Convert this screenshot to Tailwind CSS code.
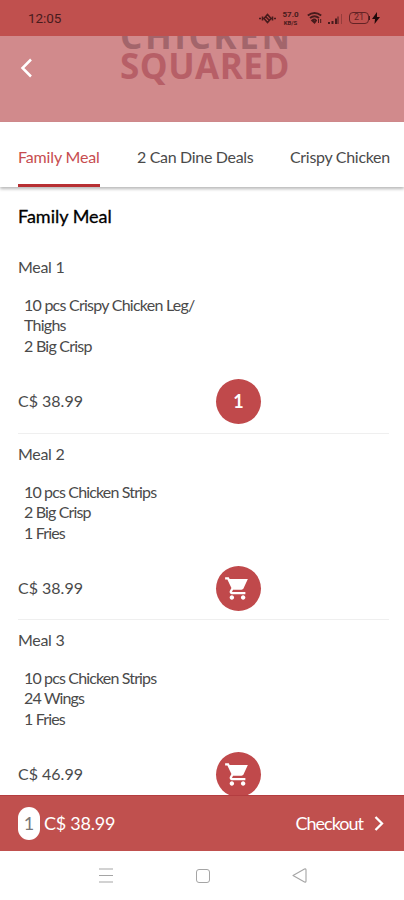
<!DOCTYPE html>
<html lang="en">
<head>
<meta charset="utf-8">
<meta name="viewport" content="width=device-width, initial-scale=1">
<title>Chicken Squared</title>
<script src="https://cdn.jsdelivr.net/npm/@tailwindcss/browser@4"></script>
</head>
<body class="bg-white">
<svg class="hidden">
  <symbol id="cart" viewBox="0 0 24 24"><path d="M7 18c-1.1 0-1.99.9-1.99 2S5.9 22 7 22s2-.9 2-2-.9-2-2-2zM1 2v2h2l3.600 7.590-1.350 2.450c-.16.28-.25.61-.25.96 0 1.100.9 2 2 2h12v-2H7.420c-.14 0-.25-.11-.25-.25l.03-.12.9-1.630h7.450c.75 0 1.410-.41 1.750-1.030L21.200 3.500H5L4.270 2H1zm16 16c-1.100 0-1.990.9-1.990 2s.89 2 1.990 2 2-.9 2-2-.9-2-2-2z"/></symbol>
</svg>
<div class="flex h-[900px] w-[404px] flex-col overflow-hidden bg-white font-['Lato',sans-serif] text-base text-[#4a4a4a]">
  <div class="flex h-9 shrink-0 items-center bg-[#c0504e] pl-7 pr-6 text-[#471b1c]">
    <span class="font-['Roboto',sans-serif] text-[13.5px] tracking-[-0.1px]">12:05</span>
    <div class="ml-auto flex items-center">
      <svg class="mr-[6px] h-4 w-[17px]" viewBox="0 0 17 16" fill="none" stroke="currentColor" stroke-width="1.600"><path d="M0 8.500h2M15 8.500h2M3.500 6.500v4M13.500 6.500v4M5 8.500l3.500-4 3.500 4-3.500 4zM6.500 6.500l4 4"/></svg>
      <div class="mr-[8px] flex w-[17px] flex-col items-center font-['Roboto',sans-serif] font-bold">
        <span class="h-[8px] text-[8px] leading-[8px]">57.0</span>
        <span class="h-[7px] text-[6px] leading-[7px]">KB/S</span>
      </div>
      <svg class="mr-[6px] h-4 w-[15px]" viewBox="0 0 15 16" fill="none" stroke="currentColor" stroke-width="1.900"><path d="M.8 5.500Q7.500.5 14.200 5.500M3 8Q7.500 4.500 12 8M5.200 10.500Q7.500 8.500 9 10.500L7.500 12.500z"/><path d="M11.500 9v4M13.700 9v4" stroke-width="1"/></svg>
      <svg class="mr-[7px] h-4 w-[14px]" viewBox="0 0 14 16" fill="currentColor"><path d="M0 12h2v2H0zM3.500 11h2v3h-2zM7 8.500h2V14H7z"/><path d="M9.500 6.500h1V14h-1z"/><path d="M13 4h1v10h-1z" opacity=".35"/></svg>
      <div class="flex h-[12px] w-5 items-center justify-center rounded-[4px] border-[1.5px] border-current font-['Roboto',sans-serif] text-[9px] text-[#632325]">21</div>
      <div class="h-1 w-px bg-current"></div>
      <svg class="ml-[2px] h-3 w-[8px]" viewBox="0 0 8 12" fill="#210a0b"><path d="M5 0 0 7h3L2.500 12 8 5H5z"/></svg>
    </div>
  </div>
  <header class="relative h-[86px] shrink-0 overflow-hidden bg-[#d18a8c]">
    <div class="-mt-[15px] pl-[120px] font-['Open_Sans',sans-serif] text-[35px] font-bold leading-[30px] text-[#b75f67]">
      <div class="whitespace-nowrap tracking-[2.6px] text-[#a3656b]">CHICKEN</div>
      <div class="whitespace-nowrap tracking-[0.5px]">SQUARED</div>
    </div>
    <svg class="absolute left-[20px] top-[22px] h-5 w-[13px]" viewBox="0 0 13 20" fill="none" stroke="#fff" stroke-width="2.500"><path d="M11 1.500 2.500 10 11 18.500"/></svg>
  </header>
  <nav class="z-10 flex h-[65px] shrink-0 gap-[37px] bg-white pl-[18px] whitespace-nowrap shadow-[0_2px_3px_rgba(0,0,0,0.28)]">
    <div class="flex w-[82px] items-center border-b-[3px] border-[#b72f33] pt-[7px] tracking-[-0.15px] text-[#c74c4f]"><span>Family Meal</span></div>
    <div class="flex w-[116px] items-center pt-[4px] tracking-[-0.32px]"><span>2 Can Dine Deals</span></div>
    <div class="flex items-center pt-[4px] tracking-[-0.3px]"><span>Crispy Chicken</span></div>
  </nav>
  <main class="min-h-0 flex-1 overflow-hidden pl-[18px] pr-[15px]">
    <h1 class="flex h-[60px] items-center pb-px text-[18px] font-normal text-black [-webkit-text-stroke:0.3px_black]">Family Meal</h1>
    <section class="flex h-[187px] flex-col border-b border-[#efefef] pt-[10px]">
      <h2 class="leading-5 tracking-[-0.3px]">Meal 1</h2>
      <p class="mt-[18px] pl-[6px] leading-[20.3px] tracking-[-0.75px] whitespace-nowrap">10 pcs Crispy Chicken Leg/<br>Thighs<br>2 Big Crisp</p>
      <div class="mt-[23px] flex items-center"><span class="w-[198px]">C$ 38.99</span><button class="flex size-[45px] items-center justify-center rounded-full bg-[#c0494b] text-lg font-bold text-white">1</button></div>
    </section>
    <section class="flex h-[186px] flex-col border-b border-[#efefef] pt-[10px]">
      <h2 class="leading-5 tracking-[-0.3px]">Meal 2</h2>
      <p class="mt-[18px] pl-[6px] leading-[20.3px] tracking-[-0.85px] whitespace-nowrap">10 pcs Chicken Strips<br>2 Big Crisp<br>1 Fries</p>
      <div class="mt-[23px] flex items-center"><span class="w-[198px]">C$ 38.99</span><button class="flex size-[45px] items-center justify-center rounded-full bg-[#c0494b] pr-[2px] text-white"><svg class="size-[27px] fill-current"><use href="#cart"/></svg></button></div>
    </section>
    <section class="flex h-[187px] flex-col pt-[10px]">
      <h2 class="leading-5 tracking-[-0.3px]">Meal 3</h2>
      <p class="mt-[18px] pl-[6px] leading-[20.3px] tracking-[-0.85px] whitespace-nowrap">10 pcs Chicken Strips<br>24 Wings<br>1 Fries</p>
      <div class="mt-[23px] flex items-center"><span class="w-[198px]">C$ 46.99</span><button class="flex size-[45px] items-center justify-center rounded-full bg-[#c0494b] pr-[2px] text-white"><svg class="size-[27px] fill-current"><use href="#cart"/></svg></button></div>
    </section>
  </main>
  <footer class="flex h-14 shrink-0 items-center border-t border-[#b43d40] bg-[#c0504e] pl-[18px] pr-[20px] text-[18px] text-white">
    <span class="mr-[4px] flex h-[33px] w-[22px] items-center justify-center rounded-full bg-white text-[#777]">1</span>
    <span class="tracking-[-0.25px]">C$ 38.99</span>
    <span class="ml-auto tracking-[-1px]">Checkout</span>
    <svg class="ml-[11px] h-[15px] w-[10px]" viewBox="0 0 10 15" fill="none" stroke="currentColor" stroke-width="2.300"><path d="M1.500 1 8 7.500 1.500 14"/></svg>
  </footer>
  <div class="flex h-[49px] shrink-0 items-center pl-[99px] text-[#a5a5a5]">
    <svg class="h-[15px] w-[14px]" viewBox="0 0 14 15" fill="none" stroke="currentColor" stroke-width="1.200"><path d="M0 1h14M0 7.500h14M0 14h14"/></svg>
    <div class="ml-[83px] size-[14px] rounded-[3px] border border-current"></div>
    <svg class="ml-[82px] h-[15px] w-[15px]" viewBox="0 0 15 15" fill="none" stroke="currentColor" stroke-width="1.100" stroke-linejoin="round"><path d="M1 7.500 12.500 1Q14 .5 14 2v11q0 1.500-1.500 1z"/></svg>
  </div>
</div>
</body>
</html>
